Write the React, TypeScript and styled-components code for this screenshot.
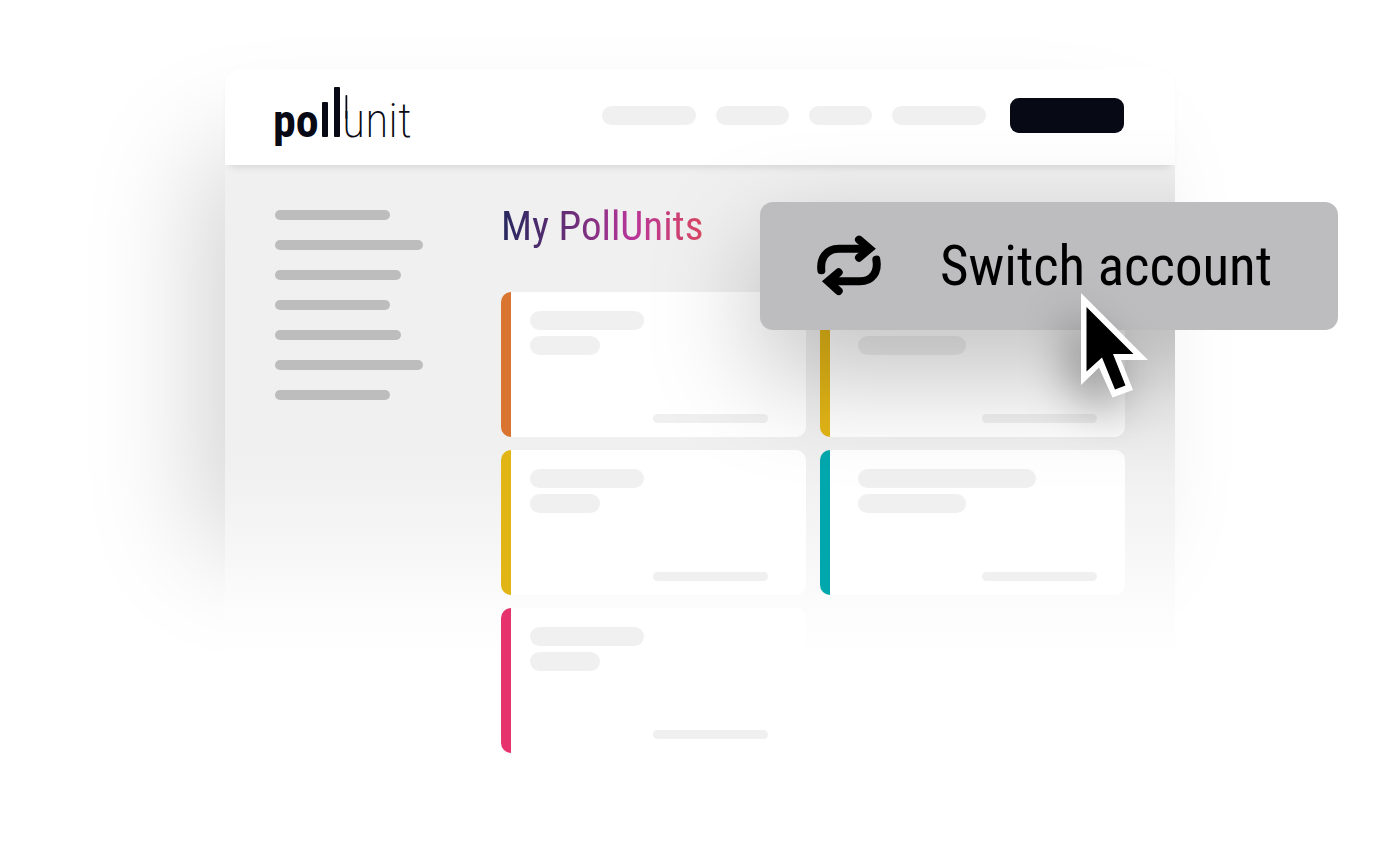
import React from "react";
import styled, { createGlobalStyle } from "styled-components";

const GlobalStyle = createGlobalStyle`
  *, *::before, *::after { box-sizing: border-box; }
  body {
    margin: 0;
    background: #fff;
    color: #000;
    font-family: "Roboto Condensed", Roboto, sans-serif;
    overflow-x: hidden;
  }
`;

const Stage = styled.main`
  display: flex;
  justify-content: center;
  padding: 69px 24px 98px;
`;

const Mockup = styled.div`
  position: relative;
  isolation: isolate;
  flex: 1;
  max-width: 950px;

  /* soft shadow that falls to the left behind the window */
  &::before {
    content: "";
    position: absolute;
    z-index: -1;
    top: 84px;
    bottom: 206px;
    left: 0;
    right: 36px;
    box-shadow: -22px 0 110px rgba(0, 0, 0, 0.18);
  }
`;

const WindowFrame = styled.div`
  border-radius: 16px 16px 0 0;
  background: linear-gradient(#f0f0f0 390px, #f4f4f4 450px, #fcfcfc 540px, #fff 590px);
`;

const Header = styled.header`
  position: relative;
  display: flex;
  align-items: center;
  justify-content: space-between;
  height: 96px;
  padding: 0 51px 4px 46px;
  border-radius: 16px 16px 0 0;
  background: #fff;
  box-shadow: 0 6px 8px -5px rgba(0, 0, 0, 0.14);
`;

const LogoLink = styled.a`
  display: block;
  height: 64px;
  color: #070914;
`;

const Nav = styled.nav`
  display: flex;
  align-items: center;
  gap: 20px;
`;

const Pill = styled.span<{ $width: number }>`
  display: block;
  width: ${(p) => p.$width}px;
  height: 19px;
  border-radius: 10px;
  background: #f0f0f0;
`;

const HeaderButton = styled.button`
  width: 114px;
  height: 35px;
  margin: 0 0 0 4px;
  padding: 0;
  border: 0;
  border-radius: 9px;
  background: #070914;
`;

const Body = styled.div`
  display: grid;
  grid-template-columns: 226px 1fr;
  padding: 36px 50px 0;
`;

const Sidebar = styled.aside`
  display: flex;
  flex-direction: column;
  gap: 20px;
  padding-top: 9px;
`;

const SideLine = styled.span<{ $width: number }>`
  width: ${(p) => p.$width}px;
  height: 10px;
  border-radius: 5px;
  background: #bdbdbd;
`;

const Title = styled.h1`
  width: fit-content;
  margin: 0 0 41px;
  font-size: 41px;
  line-height: 50px;
  font-weight: 400;
  color: transparent;
  background: linear-gradient(90deg, #26285f, #6b2f78 35%, #b8359a 65%, #d94862 100%);
  background-clip: text;
  -webkit-background-clip: text;
`;

const CardGrid = styled.div`
  display: grid;
  grid-template-columns: 1fr 1fr;
  gap: 13px 14px;
`;

const Card = styled.article<{ $color: string; $wide: boolean }>`
  display: flex;
  flex-direction: column;
  gap: 6px;
  height: 145px;
  padding: ${(p) => (p.$wide ? "19px 28px 14px" : "19px 38px 14px 19px")};
  border-left: 10px solid ${(p) => p.$color};
  border-radius: 10px;
  background: #fff;
`;

const CardFooter = styled.span`
  width: 115px;
  height: 9px;
  margin-top: auto;
  align-self: flex-end;
  border-radius: 5px;
  background: #f0f0f0;
`;

/* shadow of the floating button, cut off at the window's edge */
const Shade = styled.div`
  position: absolute;
  inset: 0;
  overflow: hidden;
  border-radius: 16px 16px 0 0;
  pointer-events: none;

  &::before {
    content: "";
    position: absolute;
    top: 143px;
    right: -153px;
    width: 558px;
    height: 108px;
    box-shadow: 0 42px 110px 10px rgba(0, 0, 0, 0.26);
  }
`;

const SwitchButton = styled.button`
  position: absolute;
  top: 133px;
  right: -163px;
  display: flex;
  align-items: center;
  gap: 50px;
  width: 578px;
  height: 128px;
  padding: 0 50px;
  border: 0;
  border-radius: 13px;
  background: #bdbdbf;
  color: #000;
  font-family: inherit;
  font-size: 55px;
  line-height: 64px;
  font-weight: 400;
  white-space: nowrap;
`;

const Cursor = styled.svg`
  position: absolute;
  top: 223px;
  right: 26px;
  filter: drop-shadow(-12px 18px 22px rgba(0, 0, 0, 0.34));
  pointer-events: none;
`;

const Logo = () => (
  <svg width="152" height="64" viewBox="-4 -2 152 64" fill="currentColor" role="img" aria-label="pollunit">
    <g fontFamily='"Roboto Condensed", Roboto, sans-serif'>
      <text x="-2" y="52" fontSize="46" fontWeight="700">po</text>
      <text x="67" y="52" fontSize="48" fontWeight="200">unit</text>
    </g>
    <rect x="47" y="17" width="6" height="35" rx="1" />
    <rect x="59" y="2" width="6" height="50" rx="1" />
    <rect x="70.500" y="10" width="1.750" height="24" rx="0.800" />
  </svg>
);

const SwitchIcon = () => (
  <svg width="80" height="80" viewBox="0 0 240 240" fill="none" stroke="currentColor" strokeWidth="24" strokeLinecap="round" aria-hidden="true">
    <path d="M34 133 C30 96 50 68 86 68 H176" />
    <path d="M147 41 L179 68 L147 95" strokeMiterlimit="8" />
    <path d="M199 101 C206 138 186 166 150 166 H58" />
    <path d="M86 139 L54 166 L86 195" strokeMiterlimit="8" />
  </svg>
);

const navWidths = [94, 73, 63, 94];
const sideWidths = [115, 148, 126, 115, 126, 148, 115];
const cards = [
  { color: "#d97530", wide: false },
  { color: "#e2b516", wide: true },
  { color: "#e2b516", wide: false },
  { color: "#00a8ad", wide: true },
  { color: "#e6336e", wide: false },
];

export default function App() {
  return (
    <>
      <GlobalStyle />
      <Stage>
        <Mockup>
          <WindowFrame>
            <Header>
              <LogoLink href="#">
                <Logo />
              </LogoLink>
              <Nav>
                {navWidths.map((width, i) => (
                  <Pill key={i} $width={width} />
                ))}
                <HeaderButton type="button" aria-label="Account" />
              </Nav>
            </Header>
            <Body>
              <Sidebar>
                {sideWidths.map((width, i) => (
                  <SideLine key={i} $width={width} />
                ))}
              </Sidebar>
              <section>
                <Title>My PollUnits</Title>
                <CardGrid>
                  {cards.map((card, i) => (
                    <Card key={i} $color={card.color} $wide={card.wide}>
                      <Pill $width={card.wide ? 178 : 114} />
                      <Pill $width={card.wide ? 108 : 70} />
                      <CardFooter />
                    </Card>
                  ))}
                </CardGrid>
              </section>
            </Body>
          </WindowFrame>
          <Shade />
          <SwitchButton type="button">
            <SwitchIcon />
            Switch account
          </SwitchButton>
          <Cursor width="70" height="108" viewBox="0 0 70 108" aria-hidden="true">
            <path fill="#fff" d="M2 1 L69 68 L42 68 L54 98 L33.500 105.500 L20 75.500 L2 93 Z" />
            <path fill="#000" d="M7.500 15 L54.500 62 L34 62 L46.500 93.500 L36 97.500 L23 65.500 L7.500 79.500 Z" />
          </Cursor>
        </Mockup>
      </Stage>
    </>
  );
}
